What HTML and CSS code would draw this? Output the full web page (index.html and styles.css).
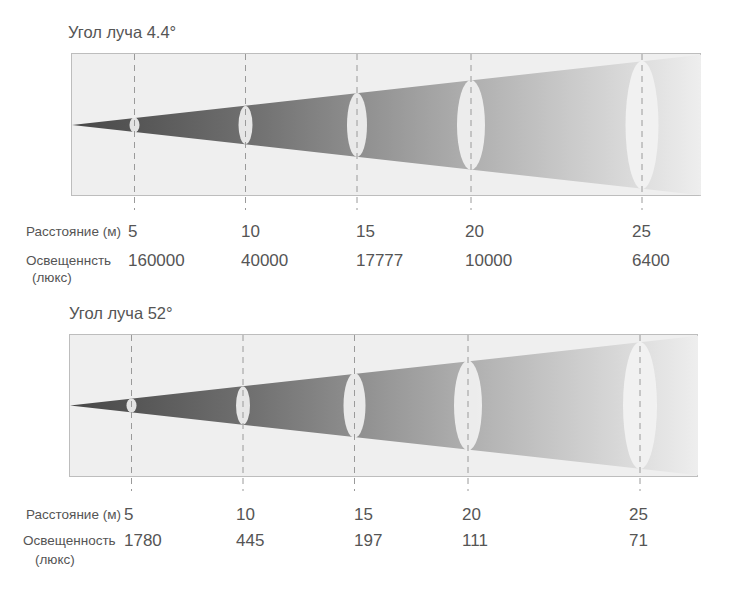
FILE: index.html
```html
<!DOCTYPE html>
<html lang="ru">
<head>
<meta charset="utf-8">
<title>Угол луча</title>
<link rel="stylesheet" href="styles.css">
</head>
<body>
<section class="panel panel-a">
  <h2 class="title">Угол луча 4.4°</h2>
  <svg class="chart" viewBox="0 0 736 164" width="736" height="164">
    <defs>
      <linearGradient id="beamA" gradientUnits="userSpaceOnUse" x1="72" y1="0" x2="701" y2="0">
        <stop offset="0" stop-color="#474747"/>
        <stop offset="0.3" stop-color="#727272"/>
        <stop offset="0.6" stop-color="#a9a9a9"/>
        <stop offset="0.88" stop-color="#d9d9d9"/>
        <stop offset="1" stop-color="#eeeeee"/>
      </linearGradient>
    </defs>
    <rect x="71.5" y="5.5" width="629" height="142" fill="#efefef" stroke="#bdbdbd"/>
    <polygon points="72,77 701,6.8 701,147.2" fill="url(#beamA)"/>
    <g fill="#f3f3f3" fill-opacity="0.9">
      <ellipse cx="134.5" cy="77" rx="5" ry="7.5"/>
      <ellipse cx="245.5" cy="77" rx="7" ry="19"/>
      <ellipse cx="357" cy="77" rx="10" ry="32"/>
      <ellipse cx="471" cy="77" rx="14" ry="45"/>
      <ellipse cx="642" cy="77" rx="16.5" ry="64"/>
    </g>
    <g stroke="#9a9a9a" stroke-width="1" stroke-dasharray="6 5">
      <line x1="134.5" y1="6" x2="134.5" y2="162"/>
      <line x1="245.5" y1="6" x2="245.5" y2="162"/>
      <line x1="357" y1="6" x2="357" y2="162"/>
      <line x1="471" y1="6" x2="471" y2="162"/>
      <line x1="642" y1="6" x2="642" y2="162"/>
    </g>
  </svg>
  <div class="row row-dist">
    <span class="label">Расстояние (м)</span>
    <span class="val">5</span><span class="val">10</span><span class="val">15</span><span class="val">20</span><span class="val">25</span>
  </div>
  <div class="row row-lux">
    <span class="label">Освещеннсть<span class="unit">(люкс)</span></span>
    <span class="val">160000</span><span class="val">40000</span><span class="val">17777</span><span class="val">10000</span><span class="val">6400</span>
  </div>
</section>

<section class="panel panel-b">
  <h2 class="title">Угол луча 52°</h2>
  <svg class="chart" viewBox="0 0 736 164" width="736" height="164">
    <defs>
      <linearGradient id="beamB" gradientUnits="userSpaceOnUse" x1="70" y1="0" x2="698" y2="0">
        <stop offset="0" stop-color="#474747"/>
        <stop offset="0.3" stop-color="#727272"/>
        <stop offset="0.6" stop-color="#a9a9a9"/>
        <stop offset="0.88" stop-color="#d9d9d9"/>
        <stop offset="1" stop-color="#eeeeee"/>
      </linearGradient>
    </defs>
    <rect x="69.5" y="5.5" width="628" height="142" fill="#efefef" stroke="#bdbdbd"/>
    <polygon points="70,76.5 698,6.8 698,146.2" fill="url(#beamB)"/>
    <g fill="#f3f3f3" fill-opacity="0.9">
      <ellipse cx="131.5" cy="76.5" rx="5" ry="7"/>
      <ellipse cx="243" cy="76.5" rx="7" ry="19"/>
      <ellipse cx="354.5" cy="76.5" rx="11" ry="32.5"/>
      <ellipse cx="468" cy="76.5" rx="14" ry="45"/>
      <ellipse cx="640" cy="76.5" rx="17" ry="63.5"/>
    </g>
    <g stroke="#9a9a9a" stroke-width="1" stroke-dasharray="6 5">
      <line x1="131.5" y1="6" x2="131.5" y2="162"/>
      <line x1="243" y1="6" x2="243" y2="162"/>
      <line x1="354.5" y1="6" x2="354.5" y2="162"/>
      <line x1="468" y1="6" x2="468" y2="162"/>
      <line x1="640" y1="6" x2="640" y2="162"/>
    </g>
  </svg>
  <div class="row row-dist">
    <span class="label">Расстояние (м)</span>
    <span class="val">5</span><span class="val">10</span><span class="val">15</span><span class="val">20</span><span class="val">25</span>
  </div>
  <div class="row row-lux">
    <span class="label">Освещенность<span class="unit">(люкс)</span></span>
    <span class="val">1780</span><span class="val">445</span><span class="val">197</span><span class="val">111</span><span class="val">71</span>
  </div>
</section>
</body>
</html>
```

FILE: styles.css
```css
html, body {
  margin: 0;
  padding: 0;
  background: #ffffff;
}
body {
  width: 736px;
  height: 596px;
  overflow: hidden;
  font-family: "Liberation Sans", Arial, sans-serif;
  color: #555555;
}
.panel {
  display: flex;
  flex-direction: column;
}
.title {
  margin: 0;
  font-size: 16.5px;
  font-weight: normal;
  line-height: 18px;
  height: 18px;
  color: #555555;
  padding-left: 68px;
  white-space: nowrap;
}
.panel-a .title { margin-top: 23px; }
.panel-b .title { margin-top: 19px; padding-left: 69px; }
.chart {
  display: block;
  margin-top: 7px;
}
.row {
  display: grid;
  align-items: start;
}
.panel-a .row {
  padding-left: 26px;
  grid-template-columns: 102px 113px 115px 109px 167px 1fr;
}
.panel-b .row {
  padding-left: 26px;
  grid-template-columns: 98px 112px 118px 108px 167px 1fr;
}
.panel-a .row-dist { margin-top: 10px; }
.panel-a .row-lux { margin-top: 9px; }
.panel-b .row-dist { margin-top: 12px; }
.panel-b .row-lux { margin-top: 6px; }
.label {
  display: flex;
  flex-direction: column;
  font-size: 13.5px;
  line-height: 20px;
  white-space: nowrap;
}
.panel-b .row-lux .label { margin-left: -3px; }
.unit {
  line-height: 14px;
  padding-left: 6px;
}
.panel-b .unit {
  padding-left: 12px;
  padding-top: 2px;
}
.val {
  font-size: 17px;
  line-height: 20px;
  color: #555555;
}
.panel-b .row-lux .val:first-of-type { padding-left: 3px; }
```
